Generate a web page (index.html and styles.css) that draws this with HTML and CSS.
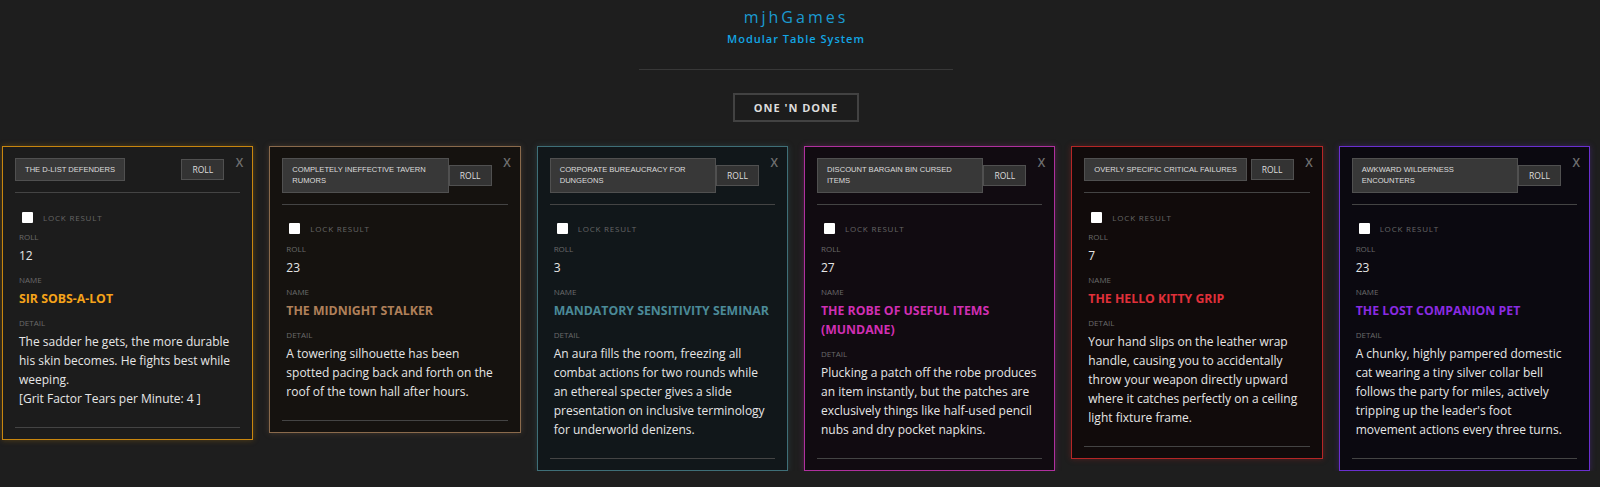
FILE: index.html
```html
<!DOCTYPE html>
<html lang="en">
<head>
    <meta charset="UTF-8">
    <meta name="viewport" content="width=device-width, initial-scale=1.0">
    <title>mjhGames - Modular Table System</title>
    <link rel="stylesheet" href="styles.css">
</head>
<body>
<div class="page">

    <header class="site-header">
        <h1>mjhGames</h1>
        <div class="subtitle">Modular Table System</div>
        <hr>
        <button class="mode-btn">ONE 'N DONE</button>
    </header>

    <div class="cards">

        <div class="card card-orange">
            <span class="close">X</span>
            <div class="card-head">
                <div class="table-name">THE D-LIST DEFENDERS</div>
                <button class="roll-btn">ROLL</button>
            </div>
            <div class="card-body">
                <label class="lock"><input type="checkbox"> LOCK RESULT</label>
                <div class="field">
                    <div class="label">ROLL</div>
                    <div class="value">12</div>
                </div>
                <div class="field">
                    <div class="label">NAME</div>
                    <div class="value name">SIR SOBS-A-LOT</div>
                </div>
                <div class="field">
                    <div class="label">DETAIL</div>
                    <div class="value">The sadder he gets, the more durable his skin becomes. He fights best while weeping.<br>[Grit Factor Tears per Minute: 4 ]</div>
                </div>
            </div>
        </div>

        <div class="card card-tan">
            <span class="close">X</span>
            <div class="card-head">
                <div class="table-name">COMPLETELY INEFFECTIVE TAVERN RUMORS</div>
                <button class="roll-btn">ROLL</button>
            </div>
            <div class="card-body">
                <label class="lock"><input type="checkbox"> LOCK RESULT</label>
                <div class="field">
                    <div class="label">ROLL</div>
                    <div class="value">23</div>
                </div>
                <div class="field">
                    <div class="label">NAME</div>
                    <div class="value name">THE MIDNIGHT STALKER</div>
                </div>
                <div class="field">
                    <div class="label">DETAIL</div>
                    <div class="value">A towering silhouette has been spotted pacing back and forth on the roof of the town hall after hours.</div>
                </div>
            </div>
        </div>

        <div class="card card-teal">
            <span class="close">X</span>
            <div class="card-head">
                <div class="table-name">CORPORATE BUREAUCRACY FOR DUNGEONS</div>
                <button class="roll-btn">ROLL</button>
            </div>
            <div class="card-body">
                <label class="lock"><input type="checkbox"> LOCK RESULT</label>
                <div class="field">
                    <div class="label">ROLL</div>
                    <div class="value">3</div>
                </div>
                <div class="field">
                    <div class="label">NAME</div>
                    <div class="value name">MANDATORY SENSITIVITY SEMINAR</div>
                </div>
                <div class="field">
                    <div class="label">DETAIL</div>
                    <div class="value">An aura fills the room, freezing all combat actions for two rounds while an ethereal specter gives a slide presentation on inclusive terminology for underworld denizens.</div>
                </div>
            </div>
        </div>

        <div class="card card-magenta">
            <span class="close">X</span>
            <div class="card-head">
                <div class="table-name">DISCOUNT BARGAIN BIN CURSED ITEMS</div>
                <button class="roll-btn">ROLL</button>
            </div>
            <div class="card-body">
                <label class="lock"><input type="checkbox"> LOCK RESULT</label>
                <div class="field">
                    <div class="label">ROLL</div>
                    <div class="value">27</div>
                </div>
                <div class="field">
                    <div class="label">NAME</div>
                    <div class="value name">THE ROBE OF USEFUL ITEMS (MUNDANE)</div>
                </div>
                <div class="field">
                    <div class="label">DETAIL</div>
                    <div class="value">Plucking a patch off the robe produces an item instantly, but the patches are exclusively things like half-used pencil nubs and dry pocket napkins.</div>
                </div>
            </div>
        </div>

        <div class="card card-red">
            <span class="close">X</span>
            <div class="card-head">
                <div class="table-name">OVERLY SPECIFIC CRITICAL FAILURES</div>
                <button class="roll-btn">ROLL</button>
            </div>
            <div class="card-body">
                <label class="lock"><input type="checkbox"> LOCK RESULT</label>
                <div class="field">
                    <div class="label">ROLL</div>
                    <div class="value">7</div>
                </div>
                <div class="field">
                    <div class="label">NAME</div>
                    <div class="value name">THE HELLO KITTY GRIP</div>
                </div>
                <div class="field">
                    <div class="label">DETAIL</div>
                    <div class="value">Your hand slips on the leather wrap handle, causing you to accidentally throw your weapon directly upward where it catches perfectly on a ceiling light fixture frame.</div>
                </div>
            </div>
        </div>

        <div class="card card-purple">
            <span class="close">X</span>
            <div class="card-head">
                <div class="table-name">AWKWARD WILDERNESS ENCOUNTERS</div>
                <button class="roll-btn">ROLL</button>
            </div>
            <div class="card-body">
                <label class="lock"><input type="checkbox"> LOCK RESULT</label>
                <div class="field">
                    <div class="label">ROLL</div>
                    <div class="value">23</div>
                </div>
                <div class="field">
                    <div class="label">NAME</div>
                    <div class="value name">THE LOST COMPANION PET</div>
                </div>
                <div class="field">
                    <div class="label">DETAIL</div>
                    <div class="value">A chunky, highly pampered domestic cat wearing a tiny silver collar bell follows the party for miles, actively tripping up the leader's foot movement actions every three turns.</div>
                </div>
            </div>
        </div>

    </div>
</div>
</body>
</html>
```

FILE: styles.css
```css
body {
    margin: 0;
    background-color: #1e1e1e;
    font-family: "Open Sans", "Noto Sans", sans-serif;
    color: #ddd;
}
.page {
    padding-right: 8px;
}
.site-header {
    display: flex;
    flex-direction: column;
    align-items: center;
    padding-top: 7px;
}
.site-header h1 {
    margin: 0;
    font-size: 16px;
    line-height: 20px;
    font-weight: 400;
    letter-spacing: 3px;
    color: #1b9bd1;
}
.subtitle {
    margin-top: 5px;
    font-size: 11px;
    line-height: 14px;
    font-weight: 600;
    letter-spacing: 1px;
    color: #12a6e4;
}
.site-header hr {
    width: 314px;
    margin: 23px 0 0;
    border: none;
    border-top: 1px solid #383838;
}
.mode-btn {
    margin-top: 23px;
    width: 126px;
    height: 29px;
    background-color: #1c1c1c;
    border: 2px solid #424242;
    color: #ddd;
    font-family: inherit;
    font-size: 11px;
    font-weight: 700;
    letter-spacing: 1px;
}
.cards {
    display: flex;
    align-items: flex-start;
    gap: 16px;
    padding: 24px 2px 0;
}
.card {
    position: relative;
    flex: 1;
    min-width: 0;
    padding: 11px 12px;
    border: 1px solid;
}
.close {
    position: absolute;
    top: 7px;
    right: 9px;
    font-size: 12px;
    font-weight: 600;
    color: #707070;
}
.card-head {
    display: flex;
    align-items: center;
    padding-right: 16px;
    padding-bottom: 11px;
    border-bottom: 1px solid #444;
}
.table-name {
    flex: 0 1 auto;
    padding: 5px 9px;
    font-family: "Liberation Sans", Arial, sans-serif;
    font-size: 7.6px;
    line-height: 11.3px;
    color: #ddd;
    background-color: #383838;
    border: 1px solid #505050;
}
.roll-btn {
    flex: none;
    margin-left: auto;
    width: 43px;
    height: 21px;
    padding: 0;
    background-color: #333;
    border: 1px solid #505050;
    color: #ddd;
    font-family: inherit;
    font-size: 8.5px;
}
.card-body {
    padding: 18px 3px 10px 4px;
    border-bottom: 1px solid #444;
}
.lock {
    display: flex;
    align-items: center;
    height: 12px;
    margin-bottom: 8px;
    font-size: 8px;
    letter-spacing: 0.8px;
    color: #666;
}
.lock input {
    appearance: none;
    width: 11px;
    height: 11px;
    margin: 0 10px 0 3px;
    background-color: #fff;
    border-radius: 1px;
}
.field {
    margin-bottom: 9px;
}
.label {
    font-size: 8px;
    line-height: 12px;
    margin-bottom: 3px;
    color: #6a6a6a;
}
.value {
    font-size: 12px;
    line-height: 19px;
    color: #e6e6e6;
}
.name {
    font-size: 12.3px;
    font-weight: 700;
}

.card-orange { border-color: #c8860f; background-color: #1c1c1c; box-shadow: 0 0 6px rgba(200, 134, 15, 0.35); }
.card-orange .name { color: #f5a31a; }
.card-tan { border-color: #8a6a4c; background-color: #15120f; box-shadow: 0 0 6px rgba(138, 106, 76, 0.35); }
.card-tan .name { color: #b0805a; }
.card-teal { border-color: #3f6f78; background-color: #11171a; box-shadow: 0 0 6px rgba(63, 111, 120, 0.35); }
.card-teal .name { color: #4b8a98; }
.card-magenta { border-color: #b0309e; background-color: #110b11; box-shadow: 0 0 6px rgba(176, 48, 158, 0.35); }
.card-magenta .name { color: #d02fb3; }
.card-red { border-color: #b52626; background-color: #110b0b; box-shadow: 0 0 6px rgba(181, 38, 38, 0.35); }
.card-red .name { color: #e0303a; }
.card-purple { border-color: #6a2fd0; background-color: #0b0910; box-shadow: 0 0 6px rgba(106, 47, 208, 0.35); }
.card-purple .name { color: #8a2be2; }
```
